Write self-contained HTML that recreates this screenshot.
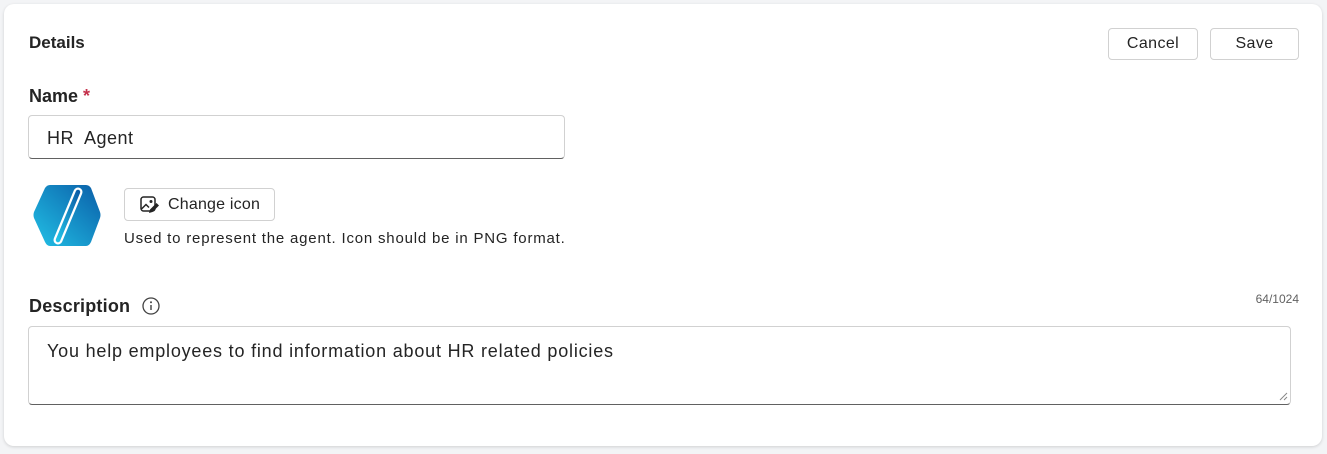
<!DOCTYPE html>
<html><head><style>
*{box-sizing:border-box;margin:0;padding:0}
body{width:1327px;height:454px;background:#f3f4f6;font-family:"Liberation Sans",sans-serif;color:#242424;position:relative;overflow:hidden}
.card{position:absolute;left:4px;top:4px;width:1318px;height:442px;background:#fff;border-radius:10px;box-shadow:0 1px 3px rgba(0,0,0,.15)}
.a{position:absolute;white-space:nowrap}
.btn{position:absolute;border:1px solid #d1d1d1;border-radius:4px;background:#fff;font-size:16px;display:flex;align-items:center;justify-content:center;color:#242424;letter-spacing:.4px}
</style></head><body>
<div class="card"></div>
<div class="a" style="left:29px;top:33px;font-size:17px;font-weight:bold">Details</div>
<div class="btn" style="left:1108px;top:28px;width:90px;height:32px">Cancel</div>
<div class="btn" style="left:1210px;top:28px;width:89px;height:32px">Save</div>
<div class="a" style="left:29px;top:86px;font-size:18px;font-weight:bold">Name <span style="color:#c4314b">*</span></div>
<div class="a" style="left:28px;top:115px;width:537px;height:44px;border:1px solid #d1d1d1;border-bottom:1.5px solid #616161;border-radius:4px;font-size:18px;padding:12px 0 0 18px;letter-spacing:.5px">HR&nbsp; Agent</div>
<svg class="a" style="left:30px;top:184px" width="72" height="64" viewBox="0 0 72 64">
<defs><linearGradient id="g" x1="0" y1="1" x2="1" y2="0"><stop offset="0" stop-color="#22c1e6"/><stop offset="1" stop-color="#0a5ea8"/></linearGradient></defs>
<path d="M20 1 H56 Q59 1 61 4 L70 28 Q71 31 70 34 L61 58 Q59 62 56 62 H20 Q17 62 15 58 L4 34 Q3 31 4 28 L15 4 Q17 1 20 1Z" fill="url(#g)"/>
<path d="M48 8 L28 56" stroke="#fff" stroke-width="9" stroke-linecap="round"/>
<path d="M48 8 L28 56" stroke="url(#g)" stroke-width="4.5" stroke-linecap="round"/>
</svg>
<div class="btn" style="left:124px;top:188px;width:151px;height:33px;font-size:16px;justify-content:flex-start;padding-left:14px;letter-spacing:.2px">
<svg width="22" height="22" viewBox="0 0 22 22" style="margin-right:7px"><rect x="2" y="3" width="14" height="14" rx="2.5" fill="none" stroke="#242424" stroke-width="1.5"/><circle cx="12" cy="7.5" r="1.5" fill="#242424"/><path d="M2.5 15 L7 10.5 L10 13.5" fill="none" stroke="#242424" stroke-width="1.5"/><path d="M10 19 L11 15.5 L17.5 9 L20 11.5 L13.5 18 Z" fill="#242424"/></svg>Change icon</div>
<div class="a" style="left:124px;top:230px;font-size:15px;color:#242424;letter-spacing:.8px">Used to represent the agent. Icon should be in PNG format.</div>
<div class="a" style="left:29px;top:296px;font-size:18px;font-weight:bold;letter-spacing:.2px">Description</div>
<svg class="a" style="left:141px;top:296px" width="20" height="20" viewBox="0 0 20 20"><circle cx="10" cy="10" r="8" fill="none" stroke="#424242" stroke-width="1.3"/><circle cx="10" cy="6.3" r="1" fill="#424242"/><path d="M10 9 V14" stroke="#424242" stroke-width="1.4"/></svg>
<div class="a" style="left:1240px;top:292px;width:59px;text-align:right;font-size:12px;color:#616161">64/1024</div>
<div class="a" style="left:28px;top:326px;width:1263px;height:79px;border:1px solid #d1d1d1;border-bottom:1.5px solid #616161;border-radius:4px;font-size:18px;padding:14px 0 0 18px;letter-spacing:.8px">You help employees to find information about HR related policies
<svg style="position:absolute;right:2px;bottom:3px" width="10" height="10" viewBox="0 0 10 10"><path d="M9 2 L2 9 M9 6 L6 9" stroke="#888" stroke-width="1"/></svg></div>
</body></html>
